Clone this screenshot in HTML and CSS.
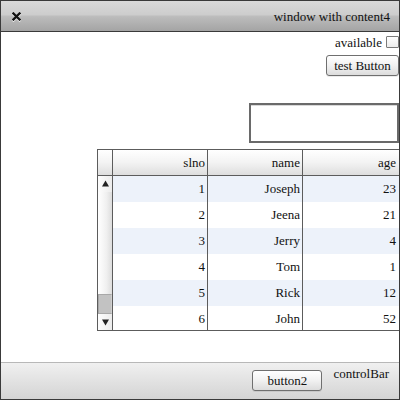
FILE: index.html
```html
<!DOCTYPE html>
<html>
<head>
<meta charset="utf-8">
<link rel="stylesheet" href="styles.css">
</head>
<body>
<div class="window">
  <div class="titlebar">
    <svg class="close" width="9" height="9" viewBox="0 0 9 9"><path d="M1.5 1.5 L7.5 7.5 M7.5 1.5 L1.5 7.5" stroke="#111" stroke-width="2.3" stroke-linecap="square"/></svg>
    <span class="title">window with content4</span>
  </div>
  <div class="content">
    <div class="avail-row"><span>available</span><span class="checkbox"></span></div>
    <div class="btn-row"><button class="btn test-btn">test Button</button></div>
    <div class="textbox"></div>
    <div class="grid">
      <div class="thead">
        <div class="corner"></div>
        <div class="th">slno</div>
        <div class="th">name</div>
        <div class="th last">age</div>
      </div>
      <div class="tbody">
        <div class="scrollbar">
          <div class="sb-btn"><svg width="7" height="7" viewBox="0 0 7 7"><path d="M3.5 0.5 L7 6.5 L0 6.5 Z" fill="#222"/></svg></div>
          <div class="sb-track"><div class="sb-thumb"></div></div>
          <div class="sb-btn"><svg width="7" height="7" viewBox="0 0 7 7"><path d="M0 0.5 L7 0.5 L3.5 6.5 Z" fill="#222"/></svg></div>
        </div>
        <div class="rows">
          <div class="row alt"><div class="td">1</div><div class="td">Joseph</div><div class="td last">23</div></div>
          <div class="row"><div class="td">2</div><div class="td">Jeena</div><div class="td last">21</div></div>
          <div class="row alt"><div class="td">3</div><div class="td">Jerry</div><div class="td last">4</div></div>
          <div class="row"><div class="td">4</div><div class="td">Tom</div><div class="td last">1</div></div>
          <div class="row alt"><div class="td">5</div><div class="td">Rick</div><div class="td last">12</div></div>
          <div class="row"><div class="td">6</div><div class="td">John</div><div class="td last">52</div></div>
        </div>
      </div>
    </div>
  </div>
  <div class="controlbar">
    <button class="btn btn2">button2</button>
    <span class="cb-label">controlBar</span>
  </div>
</div>
</body>
</html>
```

FILE: styles.css
```css
* { box-sizing: border-box; }
html, body { margin: 0; padding: 0; }
body {
  width: 400px;
  height: 400px;
  font-family: "Liberation Serif", "Times New Roman", serif;
  font-size: 13px;
  color: #111;
  background: #fff;
}
.window {
  width: 400px;
  height: 400px;
  border: 1px solid #3a3a3a;
  display: flex;
  flex-direction: column;
  background: #fff;
}
.titlebar {
  height: 31px;
  flex: none;
  border-bottom: 1px solid #3a3a3a;
  background: linear-gradient(#dadada 0%, #cdcdcd 45%, #bcbcbc 52%, #a4a4a4 100%);
  display: flex;
  align-items: center;
  padding: 0 9px 0 11px;
}
.close { display: block; filter: drop-shadow(0 1px 0 rgba(255,255,255,0.8)); margin-top: 1px; }
.title { margin-left: auto; font-size: 13px; line-height: 14px; margin-top: 2px; }
.content {
  flex: 1;
  display: flex;
  flex-direction: column;
  align-items: flex-end;
}
.avail-row {
  display: flex;
  align-items: center;
  height: 18px;
  margin-top: 2px;
}
.checkbox {
  width: 13px;
  height: 12px;
  border: 1px solid #7a7a7a;
  border-radius: 1px;
  background: linear-gradient(#fff, #ececec);
  margin-left: 4px;
  margin-top: -2px;
}
.btn-row { margin-top: 3px; }
.btn {
  font-family: "Liberation Serif", "Times New Roman", serif;
  font-size: 13px;
  color: #111;
  border: 1px solid #6f6f6f;
  border-radius: 3px;
  background: linear-gradient(#ffffff, #f1f1f1 50%, #dcdcdc);
  padding: 0;
  box-shadow: 0 1px 0 rgba(0,0,0,0.08);
}
.test-btn { width: 73px; height: 21px; }
.textbox {
  width: 150px;
  height: 40px;
  margin-top: 27px;
  border: 2px solid #6a6a6a;
  box-shadow: inset 0 1px 0 #d8d8d8;
  background: #fff;
}
.grid {
  margin-top: 6px;
  width: 302px;
  border: 1px solid #5c5c5c;
  border-right: none;
  height: 182px;
  display: flex;
  flex-direction: column;
  overflow: hidden;
}
.thead {
  display: grid;
  grid-template-columns: 15px 95px 95px 96px;
  height: 26px;
  flex: none;
  border-bottom: 1px solid #5c5c5c;
  background: linear-gradient(#ffffff, #f3f3f3 50%, #dedede);
}
.corner { border-right: 1px solid #5c5c5c; }
.th {
  border-right: 1px solid #5c5c5c;
  text-align: right;
  padding-right: 2px;
  line-height: 26px;
}
.th.last, .td.last { border-right: none; padding-right: 3px; }
.tbody { display: flex; flex: 1; min-height: 0; }
.scrollbar {
  width: 15px;
  flex: none;
  border-right: 1px solid #5c5c5c;
  display: flex;
  flex-direction: column;
  background: linear-gradient(90deg, #ffffff, #f0f0f0 60%, #dddddd);
}
.sb-btn {
  height: 16px;
  display: flex;
  align-items: center;
  justify-content: center;
  background: linear-gradient(90deg, #fdfdfd, #ececec);
  flex: none;
}
.sb-btn:first-child { padding-bottom: 2px; }
.sb-track { flex: 1; display: flex; flex-direction: column; justify-content: flex-end; }
.sb-thumb {
  height: 20px;
  background: #c2c2c2;
  border: 1px solid #a8a8a8;
  border-right-color: #d0d0d0;
}
.rows { flex: 1; }
.row {
  display: grid;
  grid-template-columns: 95px 95px 96px;
  height: 26px;
  background: #fff;
}
.row.alt { background: #edf2fa; }
.td {
  border-right: 1px solid #5c5c5c;
  text-align: right;
  padding-right: 2px;
  line-height: 26px;
}
.controlbar {
  height: 37px;
  flex: none;
  border-top: 1px solid #b8b8b8;
  background: linear-gradient(#f0f0f0, #d4d4d4);
  display: flex;
  align-items: flex-start;
  justify-content: flex-end;
  padding-right: 10px;
}
.btn2 { width: 70px; height: 21px; margin-top: 7px; }
.cb-label { margin-left: 11px; margin-top: 4px; line-height: 14px; }
```
